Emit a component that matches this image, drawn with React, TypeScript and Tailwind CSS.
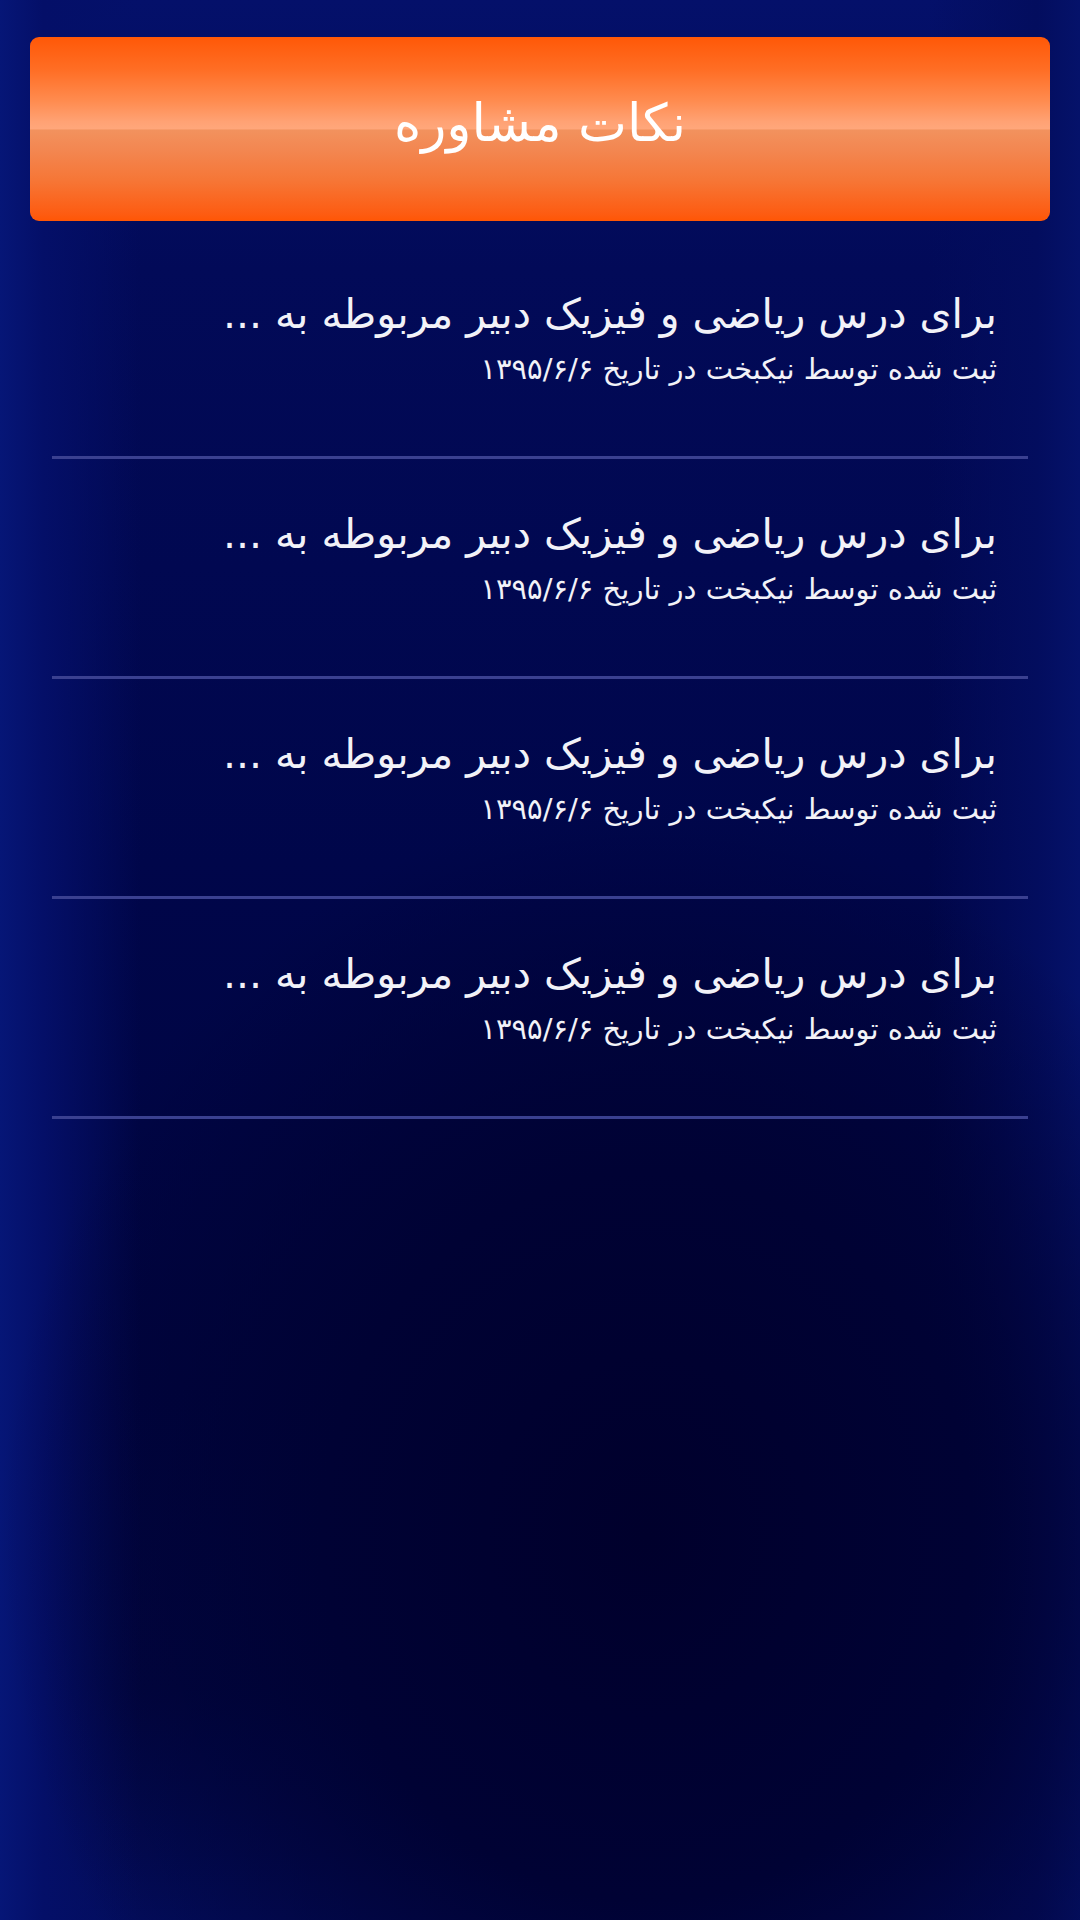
const items = [1, 2, 3, 4]

export default function App () {
  return (
    <div
      dir="rtl"
      className="min-h-[1920px] w-full px-[30px] pt-[37px] bg-[#020a55] bg-[radial-gradient(ellipse_60%_38%_at_60%_80%,#00002c_0%,#000234_50%,rgba(1,6,70,0)_100%),linear-gradient(to_right,#061677_0%,#040f68_4%,rgba(2,10,85,0)_13%,rgba(2,10,85,0)_86%,#030d5e_96%,#05126a_100%),linear-gradient(to_bottom,#04106a_0%,#020a58_14%,#00064a_45%,#00043e_72%,#010640_88%,#030d5c_100%)]"
      style={{ fontFamily: '"DejaVu Sans", "Noto Sans", sans-serif' }}
    >
      <div className="h-[184px] rounded-[9px] flex items-center justify-center bg-[linear-gradient(to_bottom,#ff5807_0%,#ff6e25_18%,#ff8c50_35%,#ffa274_46%,#ffa77b_50%,#f2925e_50.5%,#f38650_62%,#f67636_78%,#fd5c12_96%,#ff5605_100%)]">
        <h1 className="text-[52px] leading-none text-white pb-[12px]">نکات مشاوره</h1>
      </div>

      <ul className="mx-[22px] mt-[18px]">
        {items.map(i => (
          <li key={i} className="h-[220px] border-b-[3px] border-[#3a4090] pr-[31px] pt-[50px]">
            <p className="text-[41px] leading-[50px] text-[#f2f2f8] whitespace-nowrap">برای درس ریاضی و فیزیک دبیر مربوطه به ...</p>
            <p className="mt-[10px] text-[29px] leading-[40px] text-[#f2f2f8] whitespace-nowrap">ثبت شده توسط نیکبخت در تاریخ ۱۳۹۵/۶/۶</p>
          </li>
        ))}
      </ul>
    </div>
  )
}
